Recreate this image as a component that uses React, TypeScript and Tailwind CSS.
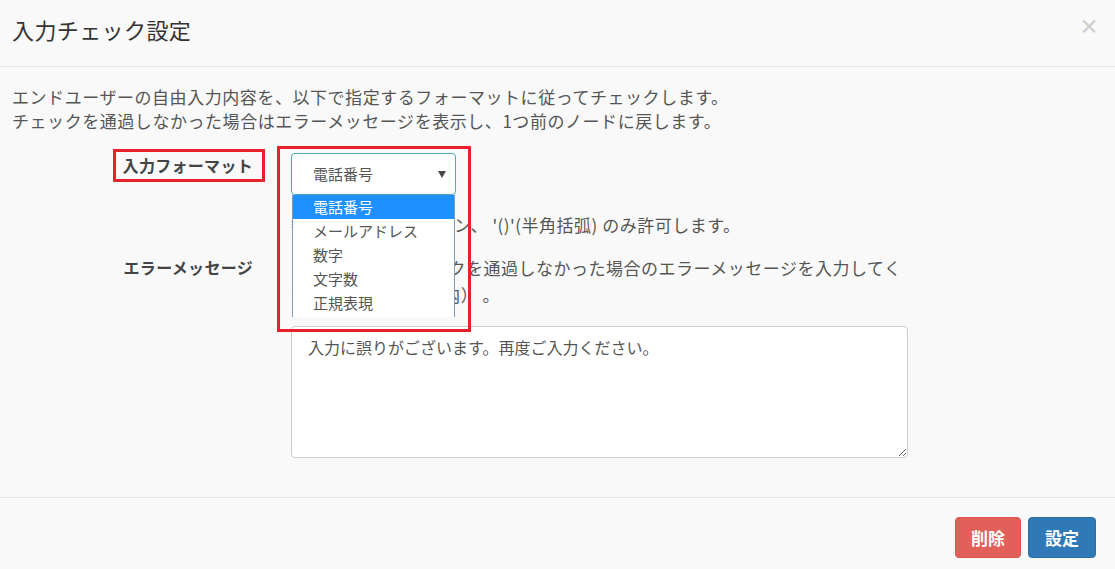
import { useState } from 'react';

const formats = ['電話番号', 'メールアドレス', '数字', '文字数', '正規表現'];

const App = () => {
  const [selected] = useState(0);

  return (
    <div className="w-[1115px] h-[569px] bg-[#f9f9f9] flex flex-col font-['Noto_Sans_CJK_JP',sans-serif] text-[#555] overflow-hidden">
      {/* header */}
      <div className="h-[67px] border-b border-[#e5e5e5] flex items-start justify-between pl-[12px] pr-[16px] pt-[13px]">
        <h4 className="text-[22px] leading-[32px] tracking-[0.4px] text-[#333]">入力チェック設定</h4>
        <button className="text-[20px] leading-[26px] font-bold text-[#cdcdcd]">×</button>
      </div>

      {/* body */}
      <div className="flex-1 px-[12px] pt-[18px] border-b border-[#e5e5e5]">
        <p className="text-[17px] leading-[24px] tracking-[0.55px]">
          エンドユーザーの自由入力内容を、以下で指定するフォーマットに従ってチェックします。
          <br />
          チェックを通過しなかった場合はエラーメッセージを表示し、1つ前のノードに戻します。
        </p>

        {/* format row */}
        <div className="flex mt-[16px]">
          <div className="w-[279px] flex justify-end pr-[26px]">
            <label className="border-[3px] border-[#e8212a] pl-[7px] pr-[9px] text-[16px] leading-[27px] font-bold text-[#444] h-[33px] tracking-[0.3px]">
              入力フォーマット
            </label>
          </div>
          <div className="flex-1 pt-[4px]">
            <div className="relative w-[165px]">
              <div className="h-[42px] border border-[#4aa9b5] rounded-[4px] bg-white flex items-center justify-between pl-[21px] pr-[9px] text-[15px] text-[#555]">
                <span>{formats[selected]}</span>
                <svg width="8" height="7" viewBox="0 0 8 7">
                  <path d="M0 0 L8 0 L4 7 Z" fill="#444" />
                </svg>
              </div>
              <ul className="absolute left-[1px] right-[1px] top-[42px] h-[122px] bg-white border-x border-[#7f9db9] z-10 text-[15px]">
                {formats.map((f, i) => (
                  <li
                    key={f}
                    className={
                      i === selected
                        ? 'h-[24px] leading-[24px] pl-[20px] bg-[#1e90ff] text-white'
                        : 'h-[24px] leading-[24px] pl-[20px] text-[#555]'
                    }
                  >
                    {f}
                  </li>
                ))}
              </ul>
              <div className="absolute left-[-14px] top-[-7px] w-[194px] h-[186px] border-[3px] border-[#e8212a] z-20 pointer-events-none" />
            </div>
            <p className="mt-[16px] text-[17px] leading-[27px] tracking-[0.5px] whitespace-nowrap">
              数字、'-'(半角ハイフン、 '()'(半角括弧) のみ許可します。
            </p>
          </div>
        </div>

        {/* error message row */}
        <div className="flex mt-[16px]">
          <div className="w-[279px] flex justify-end pr-[38px]">
            <label className="text-[16px] leading-[27px] font-bold text-[#444] tracking-[0.3px]">エラーメッセージ</label>
          </div>
          <div className="flex-1">
            <p className="text-[17px] leading-[27px] tracking-[0.5px] whitespace-nowrap">
              フォーマットチェックを通過しなかった場合のエラーメッセージを入力してく
              <br />
              ださい（100文字以内） 。
            </p>
            <textarea
              className="mt-[18px] w-[617px] h-[132px] bg-white border border-[#ccc] rounded-[4px] px-[16px] py-[8px] text-[16px] leading-[24px] text-[#555] block"
              defaultValue="入力に誤りがございます。再度ご入力ください。"
            />
          </div>
        </div>
      </div>

      {/* footer */}
      <div className="h-[71px] flex justify-end items-start gap-[7px] pt-[19px] pr-[19px]">
        <button className="w-[66px] h-[41px] rounded-[4px] bg-[#e2605a] border border-[#d9534f] text-white font-bold text-[17px]">
          削除
        </button>
        <button className="w-[68px] h-[41px] rounded-[4px] bg-[#2f79b7] border border-[#2e6da4] text-white font-bold text-[17px]">
          設定
        </button>
      </div>
    </div>
  );
};

export default App;
